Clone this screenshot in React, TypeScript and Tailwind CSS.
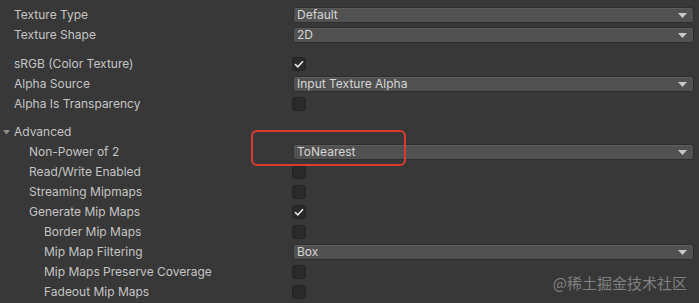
import React from 'react';

type Row =
  | { label: string; indent: number; kind: 'dropdown'; value: string; gap?: string }
  | { label: string; indent: number; kind: 'check'; checked: boolean; gap?: string }
  | { label: string; indent: number; kind: 'foldout'; gap?: string };

const rows: Row[] = [
  { label: 'Texture Type', indent: 0, kind: 'dropdown', value: 'Default' },
  { label: 'Texture Shape', indent: 0, kind: 'dropdown', value: '2D' },
  { label: 'sRGB (Color Texture)', indent: 0, kind: 'check', checked: true, gap: 'mt-[9px]' },
  { label: 'Alpha Source', indent: 0, kind: 'dropdown', value: 'Input Texture Alpha' },
  { label: 'Alpha Is Transparency', indent: 0, kind: 'check', checked: false },
  { label: 'Advanced', indent: 0, kind: 'foldout', gap: 'mt-[8px]' },
  { label: 'Non-Power of 2', indent: 1, kind: 'dropdown', value: 'ToNearest' },
  { label: 'Read/Write Enabled', indent: 1, kind: 'check', checked: false },
  { label: 'Streaming Mipmaps', indent: 1, kind: 'check', checked: false },
  { label: 'Generate Mip Maps', indent: 1, kind: 'check', checked: true },
  { label: 'Border Mip Maps', indent: 2, kind: 'check', checked: false },
  { label: 'Mip Map Filtering', indent: 2, kind: 'dropdown', value: 'Box' },
  { label: 'Mip Maps Preserve Coverage', indent: 2, kind: 'check', checked: false },
  { label: 'Fadeout Mip Maps', indent: 2, kind: 'check', checked: false },
];

const indentClass = ['pl-[14px]', 'pl-[29px]', 'pl-[44px]'];

const Dropdown = ({ value }: { value: string }) => (
  <div className="flex h-[16px] flex-1 items-center justify-between rounded-[3px] border border-[#2e2e2e] bg-[#515151] pl-[3px] pr-[6px] text-[#d4d4d4] shadow-[inset_0_1px_0_#5c5c5c]">
    <span>{value}</span>
    <svg width="9" height="5" viewBox="0 0 9 5">
      <path d="M0 0 H9 L4.5 5 Z" fill="#c8c8c8" />
    </svg>
  </div>
);

const Checkbox = ({ checked }: { checked: boolean }) => (
  <div className="flex h-[14px] w-[14px] items-center justify-center rounded-[3px] border border-[#232323] bg-[#2a2a2a]">
    {checked && (
      <svg width="10" height="8" viewBox="0 0 10 8">
        <path d="M1 4.2 L3.8 6.8 L9 1.2" stroke="#e4e4e4" strokeWidth="1.6" fill="none" />
      </svg>
    )}
  </div>
);

export default function App() {
  return (
    <div
      className="relative h-[303px] w-[699px] overflow-hidden bg-[#383838] pt-[5px] text-[12px] text-[#c4c4c4]"
      style={{ fontFamily: 'Inter, "Noto Sans", sans-serif' }}
    >
      {rows.map((r) => (
        <div key={r.label} className={`flex h-[20px] items-center pr-[5px] ${r.gap ?? ''}`}>
          {r.kind === 'foldout' ? (
            <div className="flex items-center">
              <svg width="14" height="14" viewBox="0 0 14 14" className="ml-[1px] mr-[-1px]">
                <path d="M2 5 H9 L5.5 9.5 Z" fill="#8a8a8a" />
              </svg>
              <span>{r.label}</span>
            </div>
          ) : (
            <>
              <div className={`w-[293px] shrink-0 ${indentClass[r.indent]}`}>{r.label}</div>
              {r.kind === 'dropdown' ? (
                <Dropdown value={r.value} />
              ) : (
                <div className="-ml-[1px]">
                  <Checkbox checked={r.checked} />
                </div>
              )}
            </>
          )}
        </div>
      ))}

      {/* highlight round the Non-Power of 2 field */}
      <div className="absolute left-[251px] top-[130px] h-[36px] w-[155px] rounded-[6px] border-[2.5px] border-[#dc3a2c]" />

      <div
        className="absolute right-[12px] top-[272px] text-[15px] text-[#808080]"
        style={{ fontFamily: '"Noto Sans CJK SC", sans-serif' }}
      >
        @稀土掘金技术社区
      </div>
    </div>
  );
}
